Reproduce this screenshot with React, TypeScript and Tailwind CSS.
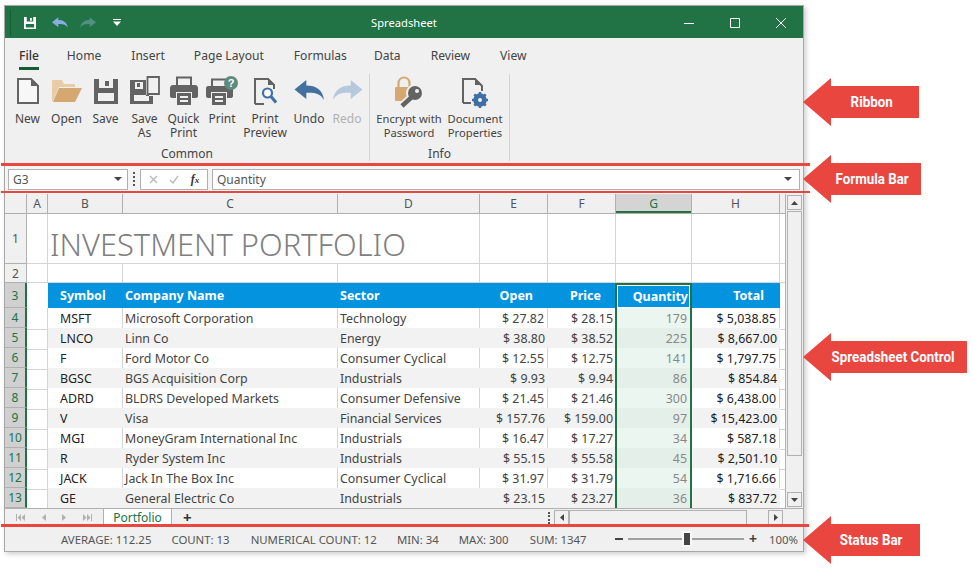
import type { ReactNode } from 'react'

const font = "font-['Noto_Sans','Open_Sans',sans-serif]"

const rows = [
  ['MSFT', 'Microsoft Corporation', 'Technology', '$ 27.82', '$ 28.15', '179', '$ 5,038.85'],
  ['LNCO', 'Linn Co', 'Energy', '$ 38.80', '$ 38.52', '225', '$ 8,667.00'],
  ['F', 'Ford Motor Co', 'Consumer Cyclical', '$ 12.55', '$ 12.75', '141', '$ 1,797.75'],
  ['BGSC', 'BGS Acquisition Corp', 'Industrials', '$ 9.93', '$ 9.94', '86', '$ 854.84'],
  ['ADRD', 'BLDRS Developed Markets', 'Consumer Defensive', '$ 21.45', '$ 21.46', '300', '$ 6,438.00'],
  ['V', 'Visa', 'Financial Services', '$ 157.76', '$ 159.00', '97', '$ 15,423.00'],
  ['MGI', 'MoneyGram International Inc', 'Industrials', '$ 16.47', '$ 17.27', '34', '$ 587.18'],
  ['R', 'Ryder System Inc', 'Industrials', '$ 55.15', '$ 55.58', '45', '$ 2,501.10'],
  ['JACK', 'Jack In The Box Inc', 'Consumer Cyclical', '$ 31.97', '$ 31.79', '54', '$ 1,716.66'],
  ['GE', 'General Electric Co', 'Industrials', '$ 23.15', '$ 23.27', '36', '$ 837.72'],
]

const colTemplate = 'grid grid-cols-[22px_21px_75px_215px_142px_68px_68px_76px_88px_1fr]'

function IconNew() {
  return <svg width="22" height="26" viewBox="0 0 22 26"><path d="M1 1h13l7 7v17H1z" fill="#f7f7f7" stroke="#636363" strokeWidth="2" /><path d="M14 0l8 8h-8z" fill="#636363" /></svg>
}
function IconOpen() {
  return <svg width="30" height="22" viewBox="0 0 30 22"><path d="M0 0h10l2 4h11v3H7L1 21H0z" fill="#e9cba6" /><path d="M7 8h23l-7 14H1z" fill="#d4a870" /></svg>
}
function IconSave() {
  return <svg width="24" height="25" viewBox="0 0 24 25"><path fillRule="evenodd" d="M0 0h24v25H0z M5 0v9h14V0z M4 14v8h16v-8z" fill="#636363" /><path d="M11 2h4v5h-4z" fill="#636363" /></svg>
}
function IconSaveAs() {
  return <svg width="30" height="28" viewBox="0 0 30 28"><path fillRule="evenodd" d="M0 4h16v16h7v8H0z M5 6v7h8V6z M4 19v6h15v-6z" fill="#636363" /><path d="M7 7h3v4H7z" fill="#636363" /><path d="M17.500 1h11.500v17H17.500z" fill="#f0f0f0" stroke="#636363" strokeWidth="1.800" /></svg>
}
function IconPrinter() {
  return <svg width="28" height="29" viewBox="0 0 28 29"><path d="M7 10V1.500h14V10" fill="none" stroke="#636363" strokeWidth="2" /><path d="M3 9h22c2 0 3 1.500 3 3v8c0 1-1 2-2 2h-4v-6H6v6H2c-1 0-2-1-2-2v-8c0-1.500 1-3 3-3z" fill="#636363" /><path fillRule="evenodd" d="M7 17h14v12H7z M10 20v2h8v-2z M10 24v2h8v-2z" fill="#636363" /></svg>
}
function IconPrintHelp() {
  return (
    <svg width="32" height="29" viewBox="0 0 32 29">
      <path d="M6 10V3.500h14" fill="none" stroke="#636363" strokeWidth="2" />
      <path d="M2 10h22c2 0 3 1 3 3v7c0 1-1 2-2 2h-4v-6H5v6H2c-1 0-2-1-2-2v-8c0-1 1-2 2-2z" fill="#636363" />
      <path fillRule="evenodd" d="M6 17h14v12H6z M9 20v2h8v-2z M9 24v2h8v-2z" fill="#636363" />
      <circle cx="25" cy="7" r="7" fill="#5d8b7d" />
      <text x="25" y="11" textAnchor="middle" fontSize="11" fontWeight="700" fill="#fff" fontFamily="Liberation Sans, sans-serif">?</text>
    </svg>
  )
}
function IconPreview() {
  return (
    <svg width="23" height="27" viewBox="0 0 23 27">
      <path d="M1 26V1h13l6 6v4 M1 26h9" fill="none" stroke="#636363" strokeWidth="2" />
      <path d="M14 0l7 7h-7z" fill="#636363" />
      <circle cx="13.500" cy="15" r="4.500" fill="#fff" stroke="#3f6fa3" strokeWidth="2.200" />
      <path d="M17 18.500l5 6" stroke="#3f6fa3" strokeWidth="3" />
    </svg>
  )
}
function IconLock() {
  return (
    <svg width="28" height="32" viewBox="0 0 28 32">
      <path d="M3.500 12V7.500c0-8 11-8 11 0V12" fill="none" stroke="#d4a870" strokeWidth="2.200" />
      <rect x="0" y="11" width="18" height="14" rx="1" fill="#d4a870" />
      <path d="M20 18 7 30" stroke="#f0f0f0" strokeWidth="8" />
      <circle cx="20" cy="17" r="9" fill="#f0f0f0" />
      <path d="M19 19 7 30" stroke="#636363" strokeWidth="4.500" />
      <circle cx="20" cy="17" r="7" fill="#636363" />
      <circle cx="22" cy="15" r="2" fill="#f0f0f0" />
    </svg>
  )
}
function IconDocProps() {
  return (
    <svg width="26" height="30" viewBox="0 0 26 30">
      <path d="M1 25V1h12l7 7v5 M1 25h8" fill="none" stroke="#636363" strokeWidth="2" />
      <path d="M13 0l7 7h-7z" fill="#636363" />
      <circle cx="18" cy="22" r="5" fill="none" stroke="#3f6fa3" strokeWidth="3.500" />
      <path d="M18 14v16M10 22h16M12.300 16.300l11.400 11.400M23.700 16.300 12.300 27.700" stroke="#3f6fa3" strokeWidth="2.500" />
      <circle cx="18" cy="22" r="2" fill="#f0f0f0" />
    </svg>
  )
}

function RibbonButton({ icon, label, width, pad, muted, small }: { icon: ReactNode; label: ReactNode; width: string; pad: string; muted?: boolean; small?: boolean }) {
  return (
    <div className={`flex flex-col items-center ${width}`}>
      <div className={`flex h-[34px] items-end justify-center ${pad}`}>{icon}</div>
      <div className={`mt-[4px] whitespace-nowrap text-center leading-[14px] ${small ? 'text-[11.2px]' : 'text-[12px]'} ${muted ? 'text-[#b0b0b0]' : 'text-[#444]'}`}>{label}</div>
    </div>
  )
}

function Arrow({ label, top, textWidth }: { label: string; top: string; textWidth: string }) {
  return (
    <div className={`absolute left-[803px] flex items-center ${top}`}>
      <div className="h-0 w-0 border-y-[24px] border-r-[28px] border-y-transparent border-r-[#ea4640]" />
      <div className={`flex h-[32px] items-center justify-center bg-[#ea4640] text-white ${textWidth}`}>
        <span className="scale-x-[0.89] whitespace-nowrap font-['Roboto',sans-serif] text-[15px] font-bold">{label}</span>
      </div>
    </div>
  )
}

function RowHead({ n, active, h }: { n: number; active?: boolean; h: string }) {
  return (
    <div className={`flex items-center justify-center border-b border-[#b0b0b0] pt-[1px] text-[12px] ${h} ${active ? 'border-r-2 border-r-[#217346] bg-[#d0d0d0] text-[#217346]' : 'border-r border-r-[#b0b0b0] bg-[#f0f0f0] text-[#555]'}`}>{n}</div>
  )
}

function App() {
  const cols = ['A', 'B', 'C', 'D', 'E', 'F', 'G', 'H']
  const head = 'flex items-center bg-[#0493de] pt-[2px] text-[12.5px] font-bold text-white'
  return (
    <div className={`relative h-[571px] w-[973px] overflow-hidden bg-white ${font}`}>
      <div className="ml-[4px] mt-[5px] flex h-[547px] w-[800px] flex-col border border-[#a8a8a8] bg-[#f0f0f0] shadow-[2px_2px_5px_rgba(0,0,0,0.2)]">
        {/* title bar */}
        <div className="flex h-[32px] shrink-0 items-center bg-[#217346] pt-[1px] text-white">
          <div className="ml-[5px] h-[27px] w-px bg-[#1a5c38]" />
          <svg className="ml-[13px]" width="12" height="12" viewBox="0 0 13 13"><path fillRule="evenodd" d="M0 0h13v13H0z M3 0v5h7V0z M2 7.500V11.500h9V7.500z" fill="#fff" /><path d="M6.500 1h2v3h-2z" fill="#fff" /></svg>
          <svg className="ml-[16px]" width="16" height="11" viewBox="0 0 33 22"><path d="M0 10.500 13 0v6c11 0 18 5 19.500 16C29 15 22 13.500 13 14v7z" fill="#87ace0" /></svg>
          <svg className="ml-[12px]" width="16" height="11" viewBox="0 0 33 22"><path d="M33 10.500 20 0v6C9 6 2 11 .5 22 4 15 11 13.500 20 14v7z" fill="#4f8f84" /></svg>
          <svg className="ml-[17px]" width="8" height="7" viewBox="0 0 8 7"><path d="M0 0h8v1H0zM0 2.500h8L4 7z" fill="#fff" /></svg>
          <div className="ml-[250px] pt-[1px] text-[11.2px]">Spreadsheet</div>
          <svg className="ml-auto" width="10" height="10" viewBox="0 0 10 10"><path d="M0 5.500h10" stroke="#fff" /></svg>
          <svg className="ml-[36px]" width="10" height="10" viewBox="0 0 10 10"><path d="M.5.500h9v9h-9z" fill="none" stroke="#fff" /></svg>
          <svg className="ml-[36px] mr-[17px]" width="10" height="10" viewBox="0 0 10 10"><path d="M0 0l10 10M10 0 0 10" stroke="#fff" /></svg>
        </div>

        {/* tabs */}
        <div className="flex h-[34px] shrink-0 items-start gap-[29px] pl-[14px] pt-[9px] text-[12.1px] leading-[18px] text-[#444]">
          <div className="relative font-medium text-[#333]">File<div className="absolute left-0 top-[20px] h-[3px] w-full bg-[#185c37]" /></div>
          <div className="-ml-px">Home</div>
          <div className="ml-px">Insert</div>
          <div>Page Layout</div>
          <div className="ml-px">Formulas</div>
          <div className="-ml-[2px]">Data</div>
          <div className="ml-px">Review</div>
          <div className="ml-px">View</div>
        </div>

        {/* ribbon */}
        <div className="flex h-[92px] shrink-0 pb-[3px] pt-[2px]">
          <div className="flex w-[365px] flex-col border-r border-[#d4d4d4]">
            <div className="flex flex-1 items-start pl-[5px]">
              <RibbonButton width="w-[35px]" pad="pb-[4px]" icon={<IconNew />} label="New" />
              <RibbonButton width="w-[43px]" pad="pb-[6px]" icon={<IconOpen />} label="Open" />
              <RibbonButton width="w-[35px]" pad="pb-[4px]" icon={<IconSave />} label="Save" />
              <RibbonButton width="w-[43px]" pad="pb-[4px]" icon={<IconSaveAs />} label={<>Save<br />As</>} />
              <RibbonButton width="w-[35px]" pad="pb-[3px]" icon={<IconPrinter />} label={<>Quick<br />Print</>} />
              <RibbonButton width="w-[42px]" pad="pb-[3px]" icon={<IconPrintHelp />} label="Print" />
              <RibbonButton width="w-[44px]" pad="pb-[3px]" icon={<IconPreview />} label={<>Print<br />Preview</>} />
              <RibbonButton width="w-[44px]" pad="pb-[8px]" icon={<svg width="33" height="20" viewBox="0 0 33 22"><path d="M0 10.500 13 0v6c11 0 18 5 19.500 16C29 15 22 13.500 13 14v7z" fill="#44709f" /></svg>} label="Undo" />
              <RibbonButton width="w-[32px]" pad="pb-[8px]" muted icon={<svg width="33" height="20" viewBox="0 0 33 22"><path d="M33 10.500 20 0v6C9 6 2 11 .5 22 4 15 11 13.500 20 14v7z" fill="#b6c8dc" /></svg>} label="Redo" />
            </div>
            <div className="h-[14px] text-center text-[12px] leading-[14px] text-[#444]">Common</div>
          </div>
          <div className="flex w-[140px] flex-col border-r border-[#d4d4d4]">
            <div className="flex flex-1 items-start">
              <RibbonButton small width="w-[78px]" pad="pb-0" icon={<IconLock />} label={<>Encrypt with<br />Password</>} />
              <RibbonButton small width="w-[54px]" pad="pb-0" icon={<IconDocProps />} label={<>Document<br />Properties</>} />
            </div>
            <div className="h-[14px] text-center text-[12px] leading-[14px] text-[#444]">Info</div>
          </div>
        </div>

        {/* formula bar */}
        <div className="flex h-[30px] shrink-0 items-center bg-[#f4f4f4] pl-[3px] pr-[3px] text-[12px] text-[#555]">
          <div className="flex h-[21px] w-[120px] items-center justify-between border border-[#b0b0b0] bg-white pl-[4px] pr-[5px]">
            <span className="pt-[2px]">G3</span>
            <svg width="8" height="4" viewBox="0 0 8 4"><path d="M0 0h8L4 4z" fill="#444" /></svg>
          </div>
          <div className="mx-[5px] h-[14px] border-l-2 border-dotted border-[#555]" />
          <div className="flex h-[21px] w-[68px] items-center justify-around border border-[#b0b0b0] bg-white px-[2px]">
            <svg width="9" height="9" viewBox="0 0 9 9"><path d="M1 1l7 7M8 1 1 8" stroke="#bbb" strokeWidth="1.400" /></svg>
            <svg width="10" height="9" viewBox="0 0 10 9"><path d="M1 5l3 3 5-7" fill="none" stroke="#bbb" strokeWidth="1.400" /></svg>
            <span className="font-['Liberation_Serif',serif] text-[12px] font-bold italic leading-none text-[#333]">f<span className="text-[9px]">x</span></span>
          </div>
          <div className="ml-[4px] flex h-[21px] flex-1 items-center justify-between border border-[#b0b0b0] bg-white pl-[4px] pr-[7px]">
            <span className="pt-[2px]">Quantity</span>
            <svg width="8" height="4" viewBox="0 0 8 4"><path d="M0 0h8L4 4z" fill="#444" /></svg>
          </div>
        </div>

        {/* sheet */}
        <div className="flex min-h-0 flex-1 bg-white">
          <div className="min-w-0 flex-1 overflow-hidden">
            <div className={`${colTemplate} h-[20px] border-b border-[#b0b0b0] bg-[#f0f0f0] text-[12px] text-[#555]`}>
              <div className="border-r border-[#b0b0b0]" />
              {cols.map(c => (
                <div key={c} className={`flex items-center justify-center border-r border-[#b0b0b0] ${c === 'G' ? 'bg-[#d4d4d4] text-[#217346] shadow-[inset_0_-2px_0_#217346]' : ''}`}>{c}</div>
              ))}
              <div />
            </div>
            <div className={`${colTemplate} h-[50px]`}>
              <RowHead n={1} h="h-[50px]" />
              <div className="border-r border-b border-[#d4d4d4]" />
              <div className="relative border-b border-[#d4d4d4]">
                <div className="absolute left-[2px] top-[10px] whitespace-nowrap text-[30.8px] font-light leading-[40px] text-[#7f7f7f]">INVESTMENT PORTFOLIO</div>
              </div>
              <div className="border-b border-[#d4d4d4]" />
              <div className="border-r border-b border-[#d4d4d4]" />
              {[0, 1, 2, 3].map(i => <div key={i} className="border-r border-b border-[#d4d4d4]" />)}
              <div className="border-b border-[#d4d4d4]" />
            </div>
            <div className={`${colTemplate} h-[19px]`}>
              <RowHead n={2} h="h-[19px]" />
              {[0, 1, 2, 3, 4, 5, 6, 7].map(i => <div key={i} className="border-r border-b border-[#d4d4d4]" />)}
              <div className="border-b border-[#d4d4d4]" />
            </div>
            <div className={`${colTemplate} h-[25px]`}>
              <RowHead n={3} h="h-[25px]" active />
              <div />
              <div className={`${head} pl-[12px]`}>Symbol</div>
              <div className={`${head} pl-[2px]`}>Company Name</div>
              <div className={`${head} pl-[2px]`}>Sector</div>
              <div className={`${head} justify-end pr-[15px]`}>Open</div>
              <div className={`${head} justify-end pr-[15px]`}>Price</div>
              <div className="-ml-px border-x-2 border-t-2 border-[#217346] bg-[#0493de]">
                <div className="flex h-full items-center justify-end border border-white pr-[1px] pt-[1px] text-[12.5px] font-bold text-white">Quantity</div>
              </div>
              <div className={`${head} justify-end pr-[16px]`}>Total</div>
              <div />
            </div>
            {rows.map((r, i) => {
              const even = i % 2 === 1
              const bg = even ? 'bg-[#f2f2f2]' : 'bg-white border-r border-[#d4d4d4]'
              return (
                <div key={r[0]} className={`${colTemplate} h-[20px] text-[12.4px] leading-[22px]`}>
                  <RowHead n={i + 4} h="h-[20px]" active />
                  <div className="border-r border-b border-[#d4d4d4]" />
                  <div className={`${bg} pl-[12px] text-[#222]`}>{r[0]}</div>
                  <div className={`${bg} pl-[2px] text-[#444]`}>{r[1]}</div>
                  <div className={`${bg} pl-[2px] text-[#444]`}>{r[2]}</div>
                  <div className={`${bg} pr-[3px] text-right text-[#444]`}>{r[3]}</div>
                  <div className={`${even ? 'bg-[#f2f2f2]' : 'bg-white'} pr-[3px] text-right text-[#444]`}>{r[4]}</div>
                  <div className={`${even ? 'bg-[#e4efe9]' : 'bg-[#ebf6f0]'} -ml-px border-x-2 border-[#217346] pr-[3px] text-right text-[#888]`}>{r[5]}</div>
                  <div className={`${bg} pr-[3px] text-right text-[#222]`}>{r[6]}</div>
                  <div className="border-b border-[#d4d4d4]" />
                </div>
              )
            })}
          </div>
          {/* vertical scroll */}
          <div className="flex w-[18px] shrink-0 flex-col items-center border-l border-[#b0b0b0] bg-[#f0f0f0]">
            <div className="mt-[1px] flex h-[15px] w-[15px] items-center justify-center border border-[#b0b0b0] bg-[#f0f0f0]"><svg width="7" height="4" viewBox="0 0 7 4"><path d="M0 4h7L3.500 0z" fill="#444" /></svg></div>
            <div className="my-[1px] h-[245px] w-[15px] border border-[#b0b0b0]" />
            <div className="flex-1" />
            <div className="mb-[1px] flex h-[15px] w-[15px] items-center justify-center border border-[#b0b0b0]"><svg width="7" height="4" viewBox="0 0 7 4"><path d="M0 0h7L3.500 4z" fill="#444" /></svg></div>
          </div>
        </div>

        {/* sheet tabs */}
        <div className="flex h-[18px] shrink-0 items-stretch border-t border-[#b0b0b0] bg-[#f0f0f0] text-[12px]">
          <div className="flex w-[98px] items-center justify-around pl-[3px] pr-[3px]">
            <svg width="10" height="7" viewBox="0 0 10 7"><path d="M0 0h1v7H0zM5 0v7L1.500 3.500zM9 0v7L5.500 3.500z" fill="#b0b0b0" /></svg>
            <svg width="4" height="7" viewBox="0 0 4 7"><path d="M4 0v7L0 3.500z" fill="#b0b0b0" /></svg>
            <svg width="4" height="7" viewBox="0 0 4 7"><path d="M0 0v7l4-3.500z" fill="#b0b0b0" /></svg>
            <svg width="10" height="7" viewBox="0 0 10 7"><path d="M9 0h1v7H9zM5 0v7l3.500-3.500zM1 0v7l3.500-3.500z" fill="#b0b0b0" /></svg>
          </div>
          <div className="flex w-[69px] items-center justify-center border-x border-[#b0b0b0] bg-white text-[#217346]">Portfolio</div>
          <div className="ml-[11px] self-center text-[15px] font-bold leading-none text-[#333]">+</div>
          <div className="ml-auto flex items-center pr-[20px]">
            <div className="mr-[4px] h-[12px] border-l-2 border-dotted border-[#555]" />
            <div className="flex h-[15px] w-[15px] items-center justify-center border border-[#b0b0b0]"><svg width="4" height="7" viewBox="0 0 4 7"><path d="M4 0v7L0 3.500z" fill="#444" /></svg></div>
            <div className="h-[15px] w-[178px] border border-[#b0b0b0]" />
            <div className="w-[21px]" />
            <div className="flex h-[15px] w-[15px] items-center justify-center border border-[#b0b0b0]"><svg width="4" height="7" viewBox="0 0 4 7"><path d="M0 0v7l4-3.500z" fill="#444" /></svg></div>
          </div>
        </div>

        {/* status bar */}
        <div className="flex h-[25px] shrink-0 items-center pl-[56px] pr-[5px] pt-[2px] text-[11.4px] text-[#555]">
          <span>AVERAGE: 112.25</span>
          <span className="ml-[20px]">COUNT: 13</span>
          <span className="ml-[21px]">NUMERICAL COUNT: 12</span>
          <span className="ml-[20px]">MIN: 34</span>
          <span className="ml-[20px]">MAX: 300</span>
          <span className="ml-[21px]">SUM: 1347</span>
          <div className="ml-auto flex items-center">
            <div className="h-[2px] w-[8px] bg-[#444]" />
            <div className="relative mx-[5px] h-[2px] w-[116px] bg-[#a0a0a0]">
              <div className="absolute left-[54px] top-[-7px] flex h-[16px] w-[10px] items-center justify-center bg-[#f8f8f8]">
                <div className="h-[12px] w-[6px] bg-[#444]" />
              </div>
            </div>
            <span className="text-[14px] font-bold leading-none text-[#444]">+</span>
            <span className="ml-[12px]">100%</span>
          </div>
        </div>
      </div>

      <div className="absolute left-[1px] top-[163px] h-[3px] w-[809px] bg-[#ea4640]" />
      <div className="absolute left-[1px] top-[191px] h-[2px] w-[809px] bg-[#ea4640]" />
      <div className="absolute left-[1px] top-[524px] h-[3px] w-[808px] bg-[#ea4640]" />

      <Arrow label="Ribbon" top="top-[78px]" textWidth="w-[88px] pr-[7px]" />
      <Arrow label="Formula Bar" top="top-[155px]" textWidth="w-[90px] pr-[7px]" />
      <Arrow label="Spreadsheet Control" top="top-[333px]" textWidth="w-[136px] pr-[12px]" />
      <Arrow label="Status Bar" top="top-[516px]" textWidth="w-[89px] pr-[9px]" />
    </div>
  )
}

export default App
